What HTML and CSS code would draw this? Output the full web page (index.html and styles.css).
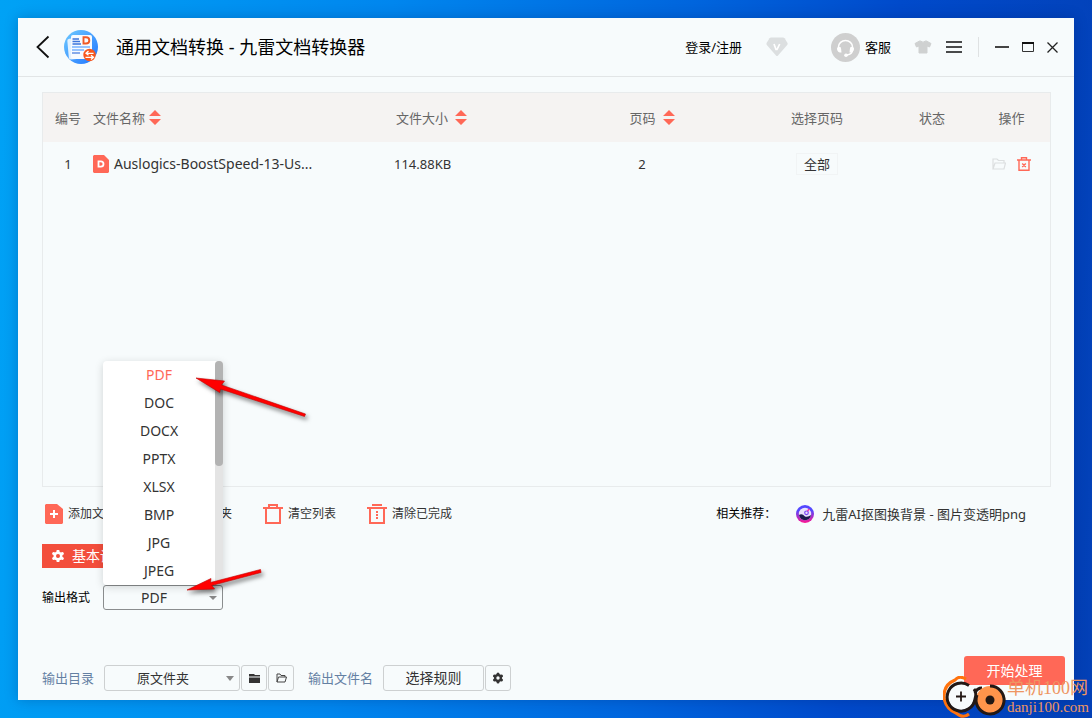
FILE: index.html
```html
<!DOCTYPE html>
<html lang="zh-CN">
<head>
<meta charset="utf-8">
<title>通用文档转换 - 九雷文档转换器</title>
<link rel="stylesheet" href="styles.css">
</head>
<body>
<div class="window">
  <header class="titlebar">
    <button class="icon-btn" aria-label="返回"><svg width="14" height="24" viewBox="0 0 14 24"><path d="M12.500 1.500L1.500 12l11 10.500" fill="none" stroke="#111" stroke-width="1.800"/></svg></button>
    <svg class="logo" width="34" height="34" viewBox="0 0 34 34" aria-hidden="true">
      <defs><linearGradient id="lg" x1="0" y1="0" x2="1" y2="1"><stop offset="0" stop-color="#6fcbff"/><stop offset="1" stop-color="#1f74ff"/></linearGradient></defs>
      <circle cx="17" cy="17" r="17" fill="url(#lg)"/>
      <rect x="4" y="8" width="18" height="21" rx="2" fill="#e3f2ff" transform="rotate(-5 13 18)"/>
      <rect x="7" y="5" width="21" height="24" rx="2" fill="#f7fbff"/>
      <path d="M8.500 9H15M8.500 11.500H16M8.500 14H17" stroke="#3d76dc" stroke-width="1.600"/>
      <path d="M8 17H26M8 20H20" stroke="#78b2ff" stroke-width="1.300"/><path d="M8 23H16" stroke="#3d76dc" stroke-width="1.200"/>
      <path d="M19.500 7.300h2.500q3.300 0 3.300 3.100t-3.300 3.100h-2.500z" fill="none" stroke="#f05a28" stroke-width="1.900"/>
      <circle cx="25.500" cy="25" r="6.200" fill="#f9571d"/>
      <path d="M29.500 23.300h-7.500m2.500-2.300L22 23.300l2.500 2M21.500 27.300h8M27 25.300l2.500 2-2.500 2.300" fill="none" stroke="#fff" stroke-width="1.300"/>
    </svg>
    <h1 class="title">通用文档转换 - 九雷文档转换器</h1>
    <nav class="account">
      <a class="login" href="#login">登录/注册</a>
      <button class="icon-btn" aria-label="会员"><svg width="22" height="20" viewBox="0 0 22 20"><path d="M5 .5h12q1 0 1.600.8L21.500 6q.5 1-.3 2L12 18.500q-1 1-2 0L.8 8Q0 7 .6 6L3.500 1.300Q4 .5 5 .5z" fill="#dcdfe0"/><path d="M8 7l2 5.500h1L13.700 7" fill="none" stroke="#fff" stroke-width="1.700"/></svg></button>
      <button class="service"><svg width="29" height="29" viewBox="0 0 29 29" aria-hidden="true"><circle cx="14.500" cy="14.500" r="14.500" fill="#cfcfcf"/><path d="M7.500 16v-2a7 6.500 0 0 1 14 0V17q0 4-5.500 5" fill="none" stroke="#fff" stroke-width="1.500"/><path d="M6 15.500q0-1.500 2-1.500h1.500q1 2 1 5.500H8.800Q6 18.500 6 15.500zM23 15.500q0-1.500-2-1.500h-1.500q-1 2-1 5.500h1.700q2.800-1 2.800-4z" fill="#fff"/><circle cx="15" cy="22.300" r="1.800" fill="#fff"/></svg>客服</button>
      <button class="icon-btn shirt" aria-label="换肤"><svg width="18" height="14" viewBox="0 0 18 14"><path d="M5.500 1h1q2.500 2.400 5 0h1L17 3.500 15.500 7 13 6v7H5V6L2.500 7 1 3.500z" fill="#cfd1d1" stroke="#cfd1d1" stroke-linejoin="round"/></svg></button>
      <button class="icon-btn" aria-label="菜单"><svg width="16" height="12" viewBox="0 0 16 12"><path d="M0 1h16M0 6h16M0 11h16" stroke="#111" stroke-width="1.600"/></svg></button>
    </nav>
    <div class="controls">
      <button class="icon-btn" aria-label="最小化"><svg width="14" height="12" viewBox="0 0 14 12"><path d="M0 6h14" stroke="#444" stroke-width="2"/></svg></button>
      <button class="icon-btn" aria-label="最大化"><svg width="12" height="10" viewBox="0 0 12 10"><path d="M.5 0v9.500h11V0" fill="none" stroke="#333"/><path d="M0 1h12" stroke="#111" stroke-width="2"/></svg></button>
      <button class="icon-btn" aria-label="关闭"><svg width="11" height="11" viewBox="0 0 11 11"><path d="M.5.5l10 10m0-10l-10 10" stroke="#222" stroke-width="1.300"/></svg></button>
    </div>
  </header>

  <main class="content">
    <section class="files">
      <table class="file-table">
        <colgroup><col class="c-no"><col class="c-name"><col class="c-size"><col class="c-page"><col class="c-range"><col class="c-state"><col class="c-act"></colgroup>
        <thead><tr>
          <th>编号</th>
          <th class="left"><button class="sort">文件名称<svg width="12" height="15" viewBox="0 0 12 15"><path d="M0 6l6-6 6 6zM0 9l6 6 6-6z" fill="#ff6857"/></svg></button></th>
          <th class="left size-head"><button class="sort wide">文件大小<svg width="12" height="15" viewBox="0 0 12 15"><path d="M0 6l6-6 6 6zM0 9l6 6 6-6z" fill="#ff6857"/></svg></button></th>
          <th><button class="sort wide">页码<svg width="12" height="15" viewBox="0 0 12 15"><path d="M0 6l6-6 6 6zM0 9l6 6 6-6z" fill="#ff6857"/></svg></button></th>
          <th>选择页码</th><th>状态</th><th>操作</th>
        </tr></thead>
        <tbody><tr>
          <td>1</td>
          <td class="left"><span class="file"><svg width="16" height="18" viewBox="0 0 16 18" aria-hidden="true"><path d="M1 0h10l5 5v12l-1 1H1l-1-1V1z" fill="#ff6857"/><path d="M5.500 6.300h2.300q2.700 0 2.700 2.700t-2.700 2.700H5.500z" fill="none" stroke="#fff" stroke-width="1.800"/></svg>Auslogics-BoostSpeed-13-Us...</span></td>
          <td class="left">114.88KB</td>
          <td class="pages">2</td>
          <td><button class="range">全部</button></td>
          <td></td>
          <td><span class="actions">
            <button class="icon-btn" aria-label="打开文件夹"><svg width="14" height="12" viewBox="0 0 14 12"><path d="M1 11V1h4l1.500 1.500H12V5M1 11l2-6h10.500L12 11z" fill="none" stroke="#dcdfe0" stroke-width="1.200"/></svg></button>
            <button class="icon-btn" aria-label="删除"><svg width="14" height="14" viewBox="0 0 14 14"><path d="M0 3h14M4.500 3V.7h5V3M2 3v10.300h10V3M5.200 6.500l3.600 3.500m0-3.500L5.200 10" fill="none" stroke="#ff6857" stroke-width="1.400"/></svg></button>
          </span></td>
        </tr></tbody>
      </table>
    </section>

    <div class="toolbar">
      <button class="tool"><svg width="20" height="20" viewBox="0 0 20 20"><path d="M3 0h11l6 5v14l-1 1H3l-1-1V1z" fill="#ff6857"/><path d="M7 10h8m-4-4v8" stroke="#fff" stroke-width="2"/></svg>添加文件</button>
      <button class="tool"><svg width="20" height="20" viewBox="0 0 20 20"><path d="M0 2h7l2 3h11v13H0z" fill="#ff6857"/></svg>添加文件夹</button>
      <button class="tool"><svg width="20" height="20" viewBox="0 0 20 20"><path d="M0 4h20M6 4V1h8v3M3 4v15h14V4" fill="none" stroke="#ff6857" stroke-width="2"/></svg>清空列表</button>
      <button class="tool"><svg width="20" height="20" viewBox="0 0 20 20"><path d="M0 4h20M5 1h10M3 4v15h14V4" fill="none" stroke="#ff6857" stroke-width="2"/><path d="M10 7v8" stroke="#ff6857" stroke-width="2" stroke-dasharray="2 1"/></svg>清除已完成</button>
      <div class="related">
        <span>相关推荐：</span>
        <a class="promo" href="#koutu"><svg width="18" height="18" viewBox="0 0 18 18" aria-hidden="true"><defs><linearGradient id="pg" x1="0" y1="0" x2="0" y2="1"><stop offset="0.300" stop-color="#5447ff"/><stop offset="1" stop-color="#ff1692"/></linearGradient></defs><circle cx="9" cy="9" r="9" fill="url(#pg)"/><circle cx="9" cy="9" r="6.200" fill="#e9e2fb"/><path d="M3 10q3-2 6 1.500 3 1 6-1.500-.8 5-6 5.200Q4 15 3 10z" fill="#1d194d"/><circle cx="10.500" cy="7.800" r="1.800" fill="none" stroke="#7b43f3" stroke-width="1.200"/><path d="M11.500 6l1.800-2" stroke="#f82eac" stroke-width="1.500"/></svg>九雷AI抠图换背景 - 图片变透明png</a>
      </div>
    </div>

    <button class="tab"><svg width="12" height="12" viewBox="0 0 12 12" aria-hidden="true"><path d="M6 1v10M1.700 3.500l8.600 5M10.300 3.500l-8.600 5" stroke="#fff" stroke-width="3" stroke-linecap="round"/><circle cx="6" cy="6" r="4.500" fill="#fff"/><circle cx="6" cy="6" r="2" fill="#f34e3c"/></svg>基本设置</button>

    <div class="format-row">
      <label for="format">输出格式</label>
      <div class="format">
        <select id="format" class="format-select"><option>PDF</option><option>DOC</option><option>DOCX</option></select>
        <svg class="caret" width="8" height="4" viewBox="0 0 8 4" aria-hidden="true"><path d="M0 0h8L4 4z" fill="#888"/></svg>
        <div class="menu">
          <ul class="menu-list">
            <li><button class="option selected">PDF</button></li>
            <li><button class="option">DOC</button></li>
            <li><button class="option">DOCX</button></li>
            <li><button class="option">PPTX</button></li>
            <li><button class="option">XLSX</button></li>
            <li><button class="option">BMP</button></li>
            <li><button class="option">JPG</button></li>
            <li><button class="option">JPEG</button></li>
          </ul>
          <div class="track"><div class="thumb"></div></div>
        </div>
        <svg class="pointers" width="130" height="240" viewBox="0 0 130 240" aria-hidden="true">
          <g fill="#f00" stroke="#c00000" stroke-width="0.600">
            <path d="M10 8l28.500 3-3 4L119.500 44l-1 2.500-84-27.500-.8 3.500z"/>
            <path d="M1 220l24-11.500-.5 4L74.500 199.500l.6 3-49.500 13 3 3.500z"/>
          </g>
        </svg>
      </div>
    </div>

    <footer class="bottom">
      <div class="output">
        <label class="out-label" for="folder">输出目录</label>
        <div class="folder">
          <select id="folder" class="folder-select"><option>原文件夹</option></select>
          <svg class="caret" width="8" height="5" viewBox="0 0 8 5" aria-hidden="true"><path d="M0 0h8L4 5z" fill="#888"/></svg>
        </div>
        <button class="box" aria-label="选择文件夹"><svg width="11" height="9" viewBox="0 0 11 9"><path d="M0 0h5l1 1h5v1.500H0zM0 3.500h11V9H0z" fill="#333"/></svg></button>
        <button class="box" aria-label="打开文件夹"><svg width="11" height="10" viewBox="0 0 11 10"><path d="M1 9V1h3l1 1.500h4V4M1 9l1.500-5H10.500L9 9z" fill="none" stroke="#444"/></svg></button>
        <span class="out-label name-label">输出文件名</span>
        <button class="rule">选择规则</button>
        <button class="box" aria-label="规则设置"><svg width="12" height="12" viewBox="0 0 12 12"><path d="M6 2v8M2.500 4l7 4M9.500 4l-7 4" stroke="#333" stroke-width="3" stroke-linecap="round"/><circle cx="6" cy="6" r="4" fill="#333"/><circle cx="6" cy="6" r="1.700" fill="#f7fbfc"/></svg></button>
      </div>
      <button class="start">开始处理</button>
    </footer>
  </main>
</div>

<div class="watermark">
  <svg width="64" height="42" viewBox="0 0 64 42" aria-hidden="true">
    <path d="M23 3Q16-1 12 4 0 9 1 22q2 11 12 15 7 6 13 1" fill="none" stroke="#ff720d" stroke-width="3"/>
    <circle cx="18" cy="21" r="13" fill="#f7fbfc"/>
    <path d="M26 9.500A14 14 0 1 0 32 23q2-6-1-10M32 17q2-5 7-5" fill="none" stroke="#221815" stroke-width="3"/>
    <path d="M13 20.500h10m-5-5v10" stroke="#221815" stroke-width="1.800"/>
    <circle cx="47" cy="24" r="14" fill="#ff944b"/><path d="M47 10a14 14 0 1 1-13 9" fill="none" stroke="#221815" stroke-width="3"/>
    <circle cx="47" cy="24" r="4.500" fill="#221815"/>
  </svg>
  <div class="mark-text"><span class="mark-name">单机100网</span><span class="mark-url">danji100.com</span></div>
</div>
</body>
</html>
```

FILE: styles.css
```css
* { box-sizing: border-box; }

body {
  margin: 0;
  min-height: 100vh;
  padding: 18px;
  display: flex;
  position: relative;
  background: linear-gradient(95deg, #00a2f5 0%, #0086ee 34%, #0065dd 60%, #004acb 78%, #0340b6 100%);
  font-family: "Noto Sans", "Noto Sans CJK SC", sans-serif;
  font-size: 13px;
  line-height: 20px;
  color: #333;
}

button, select {
  font: inherit;
  color: inherit;
  background: none;
  border: 0;
  padding: 0;
  margin: 0;
  appearance: none;
}

a { color: inherit; text-decoration: none; }
svg { display: block; flex: none; }

.window {
  flex: 1;
  min-width: 0;
  display: flex;
  flex-direction: column;
  background: #f7fbfc;
  box-shadow: 0 0 12px rgba(0, 20, 80, 0.25);
}

.icon-btn { display: flex; }

/* Title bar */
.titlebar {
  display: flex;
  align-items: center;
  height: 59px;
  padding: 0 16px 0 18px;
  border-bottom: 1px solid #e2e5e6;
}
.logo { margin-left: 14px; }
.title {
  margin: 0 0 0 18px;
  flex: 1;
  font-size: 18px;
  line-height: 26px;
  font-weight: 400;
  color: #000;
}
.account { display: flex; align-items: center; color: #000; }
.login { margin-right: 24px; }
.service { display: flex; align-items: center; gap: 5px; margin-left: 43px; }
.shirt { margin: 0 14px 0 23px; }
.controls {
  display: flex;
  align-items: center;
  gap: 13px;
  height: 20px;
  margin-left: 16px;
  padding-left: 16px;
  border-left: 1px solid #dfe2e3;
}

/* File list */
.content {
  flex: 1;
  display: flex;
  flex-direction: column;
  padding: 15px 9px 9px 24px;
}
.files {
  flex: 1;
  margin-right: 14px;
  border: 1px solid #e8ebec;
}
.file-table { width: 100%; table-layout: fixed; border-collapse: collapse; }
.c-no { width: 50px; }
.c-size { width: 167px; }
.c-page { width: 182px; }
.c-range { width: 148px; }
.c-state { width: 82px; }
.c-act { width: 77px; }
.file-table th {
  height: 49px;
  padding: 0;
  background: #f5f3f2;
  font-weight: 400;
  color: #666;
}
.file-table td { height: 43px; padding: 0; text-align: center; }
.file-table .left { text-align: left; }
.file-table .size-head { padding-left: 2px; }
.file-table .pages { padding-right: 20px; }
.sort { display: inline-flex; align-items: center; gap: 4px; }
.sort.wide { gap: 7px; }
.file { display: flex; align-items: center; gap: 5px; font-size: 14px; }
.range { width: 42px; height: 22px; border: 1px solid #f1f4f5; }
.actions { display: flex; justify-content: center; align-items: center; gap: 11px; }

/* Toolbar */
.toolbar {
  display: flex;
  align-items: center;
  gap: 31px;
  height: 26px;
  margin: 14px 39px 0 1px;
  font-size: 12px;
}
.tool { display: flex; align-items: center; gap: 5px; }
.related { display: flex; align-items: center; gap: 20px; margin-left: auto; color: #000; }
.promo { display: flex; align-items: center; gap: 8px; font-size: 13px; color: #333; }

.tab {
  display: flex;
  align-items: center;
  align-self: flex-start;
  gap: 8px;
  height: 24px;
  margin-top: 17px;
  padding: 0 14px 0 10px;
  background: #f34e3c;
  color: #fff;
  font-size: 14px;
}

/* Output format */
.format-row {
  display: flex;
  align-items: center;
  gap: 13px;
  margin-top: 17px;
  color: #000;
  font-size: 12px;
}
.format { position: relative; color: #333; }
.format-select {
  display: block;
  width: 120px;
  height: 25px;
  padding-right: 18px;
  border: 1px solid #8a8d8e;
  border-radius: 3px;
  font-size: 14px;
  text-align-last: center;
}
.caret { position: absolute; right: 6px; top: 11px; pointer-events: none; }
.menu {
  position: absolute;
  left: 0;
  bottom: 100%;
  display: flex;
  width: 120px;
  background: #fff;
  border-radius: 4px;
  box-shadow: 0 2px 8px rgba(0, 0, 0, 0.16);
}
.menu-list { flex: 1; list-style: none; margin: 0; padding: 0; }
.option { display: block; width: 100%; height: 28px; font-size: 14px; text-align: center; }
.option.selected { color: #ff6857; }
.track { width: 8px; background: #e4e4e4; border-radius: 4px 4px 0 0; }
.thumb { height: 105px; background: #b3b3b3; border-radius: 4px; }
.pointers {
  position: absolute;
  left: 83px;
  top: -215px;
  pointer-events: none;
  filter: drop-shadow(2px 3px 2px rgba(0, 0, 0, 0.5));
}

/* Bottom bar */
.bottom {
  display: flex;
  justify-content: space-between;
  align-items: flex-start;
  margin-top: 46px;
}
.output { display: flex; align-items: center; padding-top: 9px; gap: 1px; }
.out-label { color: #6480a3; margin-right: 9px; }
.name-label { margin-left: 13px; }
.folder { position: relative; }
.folder-select {
  display: block;
  width: 136px;
  height: 26px;
  padding-right: 18px;
  border: 1px solid #cdd0d1;
  border-radius: 3px;
  text-align-last: center;
}
.box {
  display: flex;
  align-items: center;
  justify-content: center;
  width: 26px;
  height: 26px;
  border: 1px solid #cdd0d1;
  border-radius: 3px;
}
.rule { width: 101px; height: 26px; border: 1px solid #cdd0d1; border-radius: 3px; font-size: 14px; }
.start {
  width: 101px;
  height: 29px;
  border-radius: 3px;
  background: #ff6857;
  color: #fff;
  font-size: 14px;
}

.watermark {
  position: absolute;
  right: 3px;
  bottom: 0;
  display: flex;
  align-items: center;
}
.mark-text {
  display: flex;
  flex-direction: column;
  color: #ee9562;
  font-family: "Liberation Serif", "Noto Sans CJK SC", serif;
  font-weight: 400;
}
.mark-name { font-size: 18px; line-height: 20px; }
.mark-url { font-size: 15px; line-height: 18px; }
```
